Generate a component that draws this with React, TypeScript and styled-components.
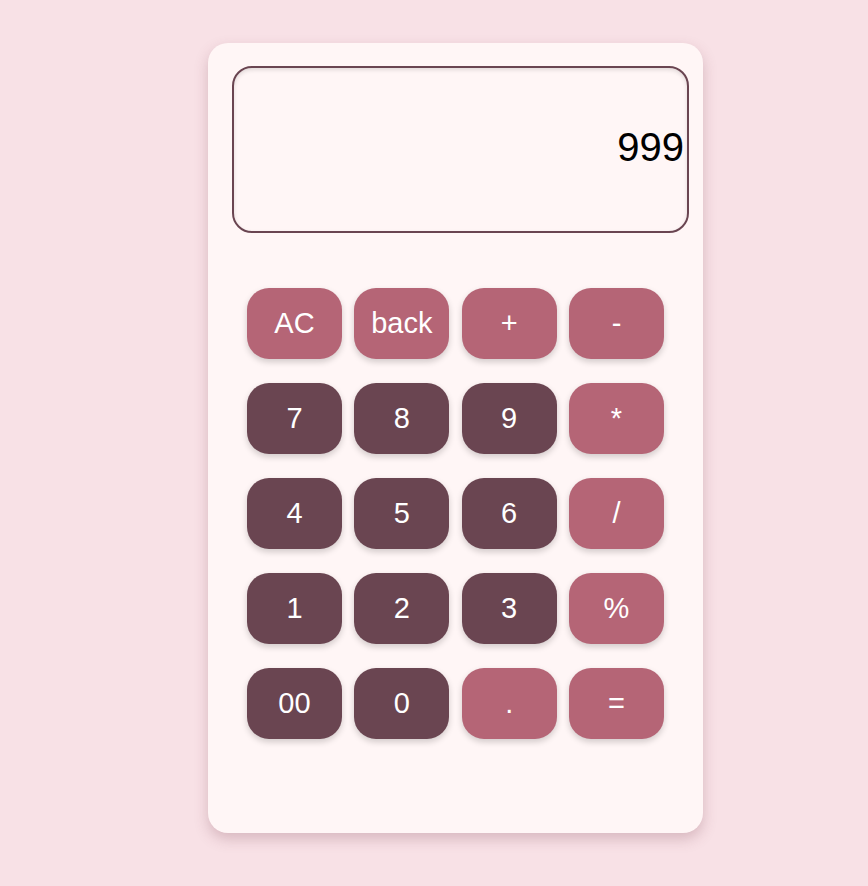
import React from "react";
import styled, { createGlobalStyle } from "styled-components";

const Global = createGlobalStyle`
  html, body { margin: 0; padding: 0; }
  body {
    background: #f8e1e6;
    font-family: "Liberation Sans", Arial, sans-serif;
    min-height: 886px;
  }
`;

const Page = styled.div`
  display: flex;
  justify-content: center;
  padding-top: 43px;
  padding-left: 43px;
`;

const Card = styled.div`
  width: 495px;
  height: 790px;
  box-sizing: border-box;
  background: #fff6f6;
  border-radius: 20px;
  box-shadow: 0 6px 14px rgba(120, 60, 75, 0.25);
  padding: 23px 14px 0 24px;
  display: flex;
  flex-direction: column;
`;

const Display = styled.div`
  height: 167px;
  box-sizing: border-box;
  border: 2px solid #6a4551;
  border-radius: 20px;
  box-shadow: inset 0 2px 4px rgba(0, 0, 0, 0.12);
  display: flex;
  align-items: center;
  justify-content: flex-end;
  padding: 0 3px 4px 0;
  font-size: 40px;
  color: #000;
`;

const Keys = styled.div`
  margin-top: 55px;
  padding-left: 15px;
  display: grid;
  grid-template-columns: repeat(4, 95px);
  grid-auto-rows: 71px;
  column-gap: 12.33px;
  row-gap: 24px;
  justify-content: start;
`;

const Key = styled.button<{ $tone: "accent" | "dark" }>`
  border: none;
  border-radius: 22px;
  background: ${(p) => (p.$tone === "accent" ? "#b56576" : "#6a4551")};
  color: #fff;
  font-family: "Liberation Sans", Arial, sans-serif;
  font-size: 29px;
  box-shadow: 0 3px 6px rgba(0, 0, 0, 0.18);
  display: flex;
  align-items: center;
  justify-content: center;
  padding: 0;
  cursor: pointer;
`;

const keys: [string, "accent" | "dark"][] = [
  ["AC", "accent"], ["back", "accent"], ["+", "accent"], ["-", "accent"],
  ["7", "dark"], ["8", "dark"], ["9", "dark"], ["*", "accent"],
  ["4", "dark"], ["5", "dark"], ["6", "dark"], ["/", "accent"],
  ["1", "dark"], ["2", "dark"], ["3", "dark"], ["%", "accent"],
  ["00", "dark"], ["0", "dark"], [".", "accent"], ["=", "accent"],
];

export default function App() {
  return (
    <>
      <Global />
      <Page>
        <Card>
          <Display>999</Display>
          <Keys>
            {keys.map(([label, tone]) => (
              <Key key={label} $tone={tone}>{label}</Key>
            ))}
          </Keys>
        </Card>
      </Page>
    </>
  );
}
